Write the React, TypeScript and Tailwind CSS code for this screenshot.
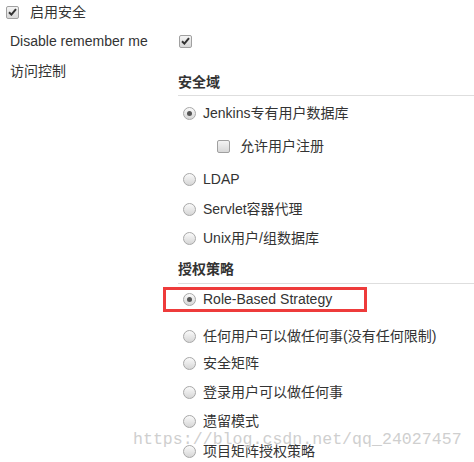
import React from "react";

const FONT = "font-['Liberation_Sans','Noto_Sans_CJK_SC',sans-serif]";

function CheckBox({ checked = false }: { checked?: boolean }) {
  return (
    <span className="flex h-[13px] w-[13px] shrink-0 items-center justify-center rounded-[2px] border border-[#a0a0a0] bg-gradient-to-b from-[#f4f4f4] to-[#d8d8d8]">
      {checked && (
        <svg width="9" height="8" viewBox="0 0 9 8">
          <path d="M1 4.2 L3.4 6.6 L8 1.2" fill="none" stroke="#333" strokeWidth="2" />
        </svg>
      )}
    </span>
  );
}

function Radio({ checked = false }: { checked?: boolean }) {
  return (
    <span className="flex h-[13px] w-[13px] shrink-0 items-center justify-center rounded-full border border-[#a8a8a8] bg-gradient-to-b from-[#fafafa] to-[#d6d6d6]">
      {checked && <span className="h-[5px] w-[5px] rounded-full bg-[#555]" />}
    </span>
  );
}

function RadioRow({ label, checked = false, className = "" }: { label: string; checked?: boolean; className?: string }) {
  return (
    <div className={`flex items-center pl-[5px] ${className}`}>
      <Radio checked={checked} />
      <span className="ml-[7px] leading-[20px]">{label}</span>
    </div>
  );
}

export default function App() {
  return (
    <div className={`relative h-[462px] w-[474px] overflow-hidden bg-white text-[14px] text-[#333] ${FONT}`}>
      {/* 启用安全 */}
      <div className="flex h-[24px] items-center pl-[6px]">
        <CheckBox checked />
        <span className="ml-[11px]">启用安全</span>
      </div>

      {/* Disable remember me */}
      <div className="mt-[5px] flex h-[24px] items-center">
        <span className="w-[179px] pl-[10px]">Disable remember me</span>
        <CheckBox checked />
      </div>

      <div className="flex">
        <div className="w-[178px] pl-[10px] pt-[8px] leading-[20px]">访问控制</div>

        <div className="flex-1">
          {/* 安全域 */}
          <div className="mt-[19px] border-b border-[#dedede] pb-[3px] font-bold leading-[20px]">安全域</div>
          <RadioRow label="Jenkins专有用户数据库" checked className="h-[34px]" />
          <div className="flex h-[32px] items-center pl-[39px]">
            <CheckBox />
            <span className="ml-[10px]">允许用户注册</span>
          </div>
          <RadioRow label="LDAP" className="h-[34px]" />
          <RadioRow label="Servlet容器代理" className="h-[26px]" />
          <RadioRow label="Unix用户/组数据库" className="h-[32px]" />

          {/* 授权策略 */}
          <div className="mt-[5px] border-b border-[#dedede] pb-[4px] font-bold leading-[20px]">授权策略</div>
          <div className="ml-[-15px] mt-[3px] flex h-[25px] w-[204px] items-center border-[3px] border-[#ee3b3b] pl-[17px]">
            <Radio checked />
            <span className="ml-[7px]">Role-Based Strategy</span>
          </div>
          <RadioRow label="任何用户可以做任何事(没有任何限制)" className="mt-[14px]" />
          <RadioRow label="安全矩阵" className="mt-[7px]" />
          <RadioRow label="登录用户可以做任何事" className="mt-[9px]" />
          <RadioRow label="遗留模式" className="mt-[9px]" />
          <RadioRow label="项目矩阵授权策略" className="mt-[10px]" />
        </div>
      </div>

      {/* watermark */}
      <div className="pointer-events-none absolute left-[133px] top-[430px] whitespace-nowrap font-['Liberation_Mono',monospace] text-[16.6px] leading-[20px] text-[#cfcfcf] [text-shadow:0_0_2px_#fff,0_0_2px_#fff]">
        https://blog.csdn.net/qq_24027457
      </div>
    </div>
  );
}
